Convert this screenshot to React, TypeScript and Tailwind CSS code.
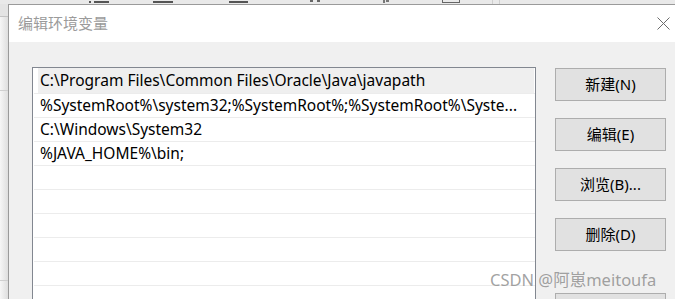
import React from 'react';

const FONT = { fontFamily: '"Noto Sans", "Noto Sans CJK SC", sans-serif' };

const PATHS = [
  'C:\\Program Files\\Common Files\\Oracle\\Java\\javapath',
  '%SystemRoot%\\system32;%SystemRoot%;%SystemRoot%\\Syste...',
  'C:\\Windows\\System32',
  '%JAVA_HOME%\\bin;',
];

const BUTTONS = [
  { label: '新建(N)', gap: 'mt-0' },
  { label: '编辑(E)', gap: 'mt-[17px]' },
  { label: '浏览(B)...', gap: 'mt-[17px]' },
  { label: '删除(D)', gap: 'mt-[17px]' },
  { label: '确定', gap: 'mt-[42px]' },
];

function TopStrip() {
  // bits of the window lying behind the dialog
  return (
    <div className="flex h-[4px] w-full shrink-0 items-start bg-[#e9e9e9]">
      <div className="ml-[89px] mt-[1px] h-[2px] w-[2px] bg-[#555]" />
      <div className="ml-[3px] mt-[1px] h-[2px] w-[15px] bg-[#555]" />
      <div className="ml-[44px] mt-[1px] h-[2px] w-[20px] bg-[#555]" />
      <div className="ml-[56px] mt-[1px] h-[2px] w-[19px] bg-[#555]" />
      <div className="ml-[62px] h-[2px] w-[3px] bg-[#666]" />
      <div className="ml-[4px] h-[2px] w-[3px] bg-[#666]" />
      <div className="ml-[63px] h-[3px] w-[2px] bg-[#777]" />
      <div className="ml-[1px] h-[2px] w-[3px] bg-[#777]" />
      <div className="ml-[53px] h-[3px] w-[18px] border-x border-b border-[#666]" />
      <div className="ml-[32px] h-[4px] w-[1px] bg-[#cfcfcf]" />
      <div className="ml-[6px] h-[4px] w-[1px] bg-[#cfcfcf]" />
    </div>
  );
}

function LeftStrip() {
  return (
    <div className="flex w-[8px] shrink-0 flex-col bg-gradient-to-r from-[#f6f6f6] to-[#dedede]">
      <div className="h-[12px] shrink-0 bg-[#e4e4e4]" />
      <div className="h-[1px] shrink-0 bg-[#c4c4c4]" />
      <div className="h-[73px] shrink-0" />
      <div className="h-[1px] shrink-0 bg-[#cfcfcf]" />
      <div className="h-[189px] shrink-0" />
      <div className="h-[1px] shrink-0 bg-[#cfcfcf]" />
    </div>
  );
}

function PathList() {
  return (
    <div className="h-[240px] w-[504px] shrink-0 border border-[#828790] bg-white pl-[1px]">
      {PATHS.map((p, i) => (
        <div
          key={i}
          className={`flex border-b border-[#ececec] ${i === 0 ? 'h-[26px] pl-[4px] pr-[1px]' : 'h-[24px] pl-[6px]'}`}
        >
          <div
            className={`flex flex-1 items-center overflow-hidden whitespace-nowrap text-[15.5px] text-black ${i === 0 ? 'bg-[#efefef] pl-[2px]' : ''}`}
          >
            {p}
          </div>
        </div>
      ))}
      {Array.from({ length: 5 }).map((_, i) => (
        <div key={`e${i}`} className="h-[24px] border-b border-[#ececec]" />
      ))}
    </div>
  );
}

export default function App() {
  return (
    <div className="relative flex h-[299px] w-[675px] flex-col overflow-hidden bg-[#f0f0f0]" style={FONT}>
      <TopStrip />
      <div className="flex h-[295px] shrink-0">
        <LeftStrip />
        <div className="flex min-h-0 flex-1 flex-col border-l border-t border-[#9a9a9a]">
          <div className="flex h-[37px] shrink-0 items-center justify-between bg-white pl-[9px] pr-[5px]">
            <span className="text-[15px] text-[#9b9b9b]">编辑环境变量</span>
            <svg width="13" height="13" viewBox="0 0 13 13">
              <path d="M0.5 0.5 L12.5 12.5 M12.5 0.5 L0.5 12.5" stroke="#6b6b6b" strokeWidth="1" fill="none" />
            </svg>
          </div>
          <div className="flex min-h-0 flex-1 overflow-hidden bg-[#f0f0f0] pl-[23px] pt-[25px]">
            <PathList />
            <div className="ml-[19px] flex shrink-0 flex-col pt-[1px]">
              {BUTTONS.map((b) => (
                <button
                  key={b.label}
                  className={`${b.gap} flex h-[33px] w-[111px] shrink-0 items-center justify-center border border-[#adadad] bg-[#e1e1e1] text-[15px] text-black`}
                >
                  {b.label}
                </button>
              ))}
            </div>
          </div>
        </div>
      </div>
      <div className="absolute left-[490px] top-[268px] text-[16.5px] text-[#8a8a8a]/80">
        CSDN @阿崽meitoufa
      </div>
    </div>
  );
}
